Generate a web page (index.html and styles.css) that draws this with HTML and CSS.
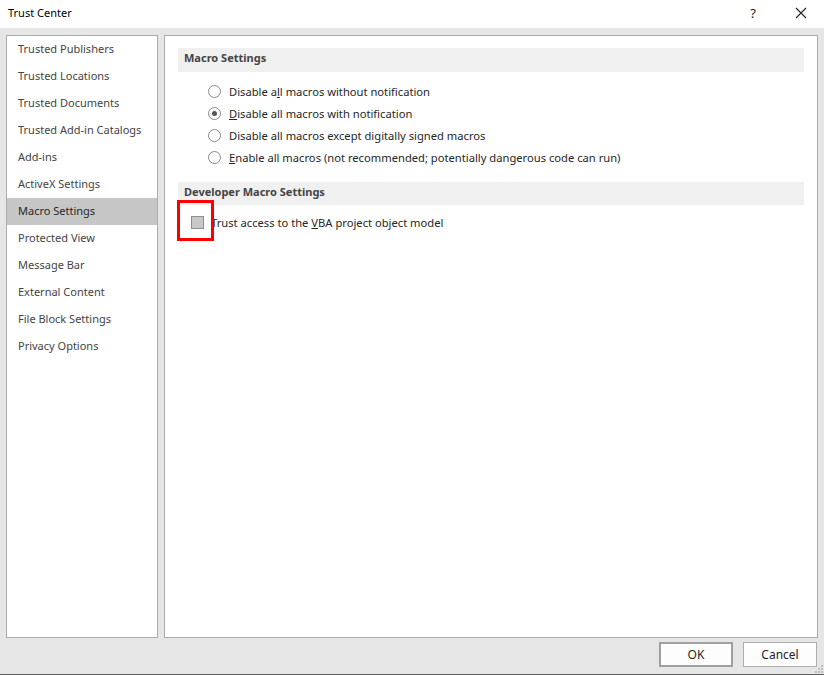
FILE: index.html
```html
<!DOCTYPE html>
<html lang="en">
<head>
    <meta charset="UTF-8">
    <meta name="viewport" content="width=device-width, initial-scale=1.0">
    <title>Trust Center</title>
    <link rel="stylesheet" href="styles.css">
</head>
<body>
    <div class="titlebar">
        <div class="title">Trust Center</div>
        <div class="help">?</div>
        <div class="close">
            <svg width="12" height="12" viewBox="0 0 12 12">
                <path d="M1 1 L11 11 M11 1 L1 11" stroke="#222" stroke-width="1.1" fill="none"/>
            </svg>
        </div>
    </div>

    <div class="main">
        <ul class="nav">
            <li>Trusted Publishers</li>
            <li>Trusted Locations</li>
            <li>Trusted Documents</li>
            <li>Trusted Add-in Catalogs</li>
            <li>Add-ins</li>
            <li>ActiveX Settings</li>
            <li class="selected">Macro Settings</li>
            <li>Protected View</li>
            <li>Message Bar</li>
            <li>External Content</li>
            <li>File Block Settings</li>
            <li>Privacy Options</li>
        </ul>

        <div class="content">
            <div class="section-head">Macro Settings</div>
            <div class="radios">
                <div class="radio-row"><span class="radio"></span>Disable a<u>l</u>l macros without notification</div>
                <div class="radio-row"><span class="radio checked"></span><u>D</u>isable all macros with notification</div>
                <div class="radio-row"><span class="radio"></span>Disable all macros except di<u>g</u>itally signed macros</div>
                <div class="radio-row"><span class="radio"></span><u>E</u>nable all macros (not recommended; potentially dangerous code can run)</div>
            </div>

            <div class="section-head dev">Developer Macro Settings</div>
            <div class="check-row">
                <span class="checkbox"></span>
                <span class="check-label">Trust access to the <u>V</u>BA project object model</span>
                <span class="highlight"></span>
            </div>
        </div>
    </div>

    <div class="footer">
        <button class="btn default">OK</button>
        <button class="btn">Cancel</button>
        <svg class="grip" width="8" height="8" viewBox="0 0 8 8">
            <rect x="6" y="0" width="2" height="2" fill="#bcbcbc"/>
            <rect x="3" y="3" width="2" height="2" fill="#bcbcbc"/>
            <rect x="6" y="3" width="2" height="2" fill="#bcbcbc"/>
            <rect x="0" y="6" width="2" height="2" fill="#bcbcbc"/>
            <rect x="3" y="6" width="2" height="2" fill="#bcbcbc"/>
            <rect x="6" y="6" width="2" height="2" fill="#bcbcbc"/>
        </svg>
    </div>
</body>
</html>
```

FILE: styles.css
```css
body {
    margin: 0;
    width: 824px;
    height: 675px;
    display: flex;
    flex-direction: column;
    background-color: #e6e6e6;
    font-family: 'Noto Sans', 'Open Sans', Arial, sans-serif;
    font-size: 11px;
    color: #262626;
    overflow: hidden;
    box-sizing: border-box;
    border-bottom: 1px solid #5f5f5f;
}
.titlebar {
    height: 28px;
    box-sizing: border-box;
    padding-bottom: 3px;
    background-color: #ffffff;
    display: flex;
    align-items: center;
    flex-shrink: 0;
}
.title {
    flex: 1;
    padding-left: 8px;
    color: #000;
}
.help {
    width: 14px;
    text-align: center;
    margin-right: 35px;
    font-size: 13px;
    color: #222;
}
.close {
    width: 12px;
    height: 12px;
    margin-right: 17px;
    display: flex;
}
.main {
    display: flex;
    gap: 6px;
    padding: 7px 6px 0 6px;
    height: 610px;
    box-sizing: border-box;
    flex-shrink: 0;
}
.nav {
    list-style: none;
    margin: 0;
    padding: 0;
    width: 152px;
    box-sizing: border-box;
    background-color: #fff;
    border: 1px solid #ababab;
}
.nav li {
    height: 27px;
    line-height: 26px;
    padding-left: 11px;
    color: #444;
    white-space: nowrap;
}
.nav li.selected {
    background-color: #c6c6c6;
    color: #262626;
}
.content {
    flex: 1;
    background-color: #fff;
    border: 1px solid #ababab;
    padding: 12px 13px 0 13px;
    font-size: 11.2px;
}
.section-head {
    height: 24px;
    line-height: 20px;
    background-color: #f0f0f0;
    padding-left: 6px;
    font-weight: bold;
    font-size: 11px;
    color: #444;
}
.section-head.dev {
    margin-top: 13px;
    height: 23px;
}
.radios {
    margin-top: 9px;
    padding-left: 30px;
}
.radio-row {
    height: 22px;
    line-height: 21px;
    display: flex;
    align-items: flex-start;
    white-space: nowrap;
}
.radio {
    width: 11px;
    height: 11px;
    margin-top: 4px;
    border: 1px solid #8a8a8a;
    border-radius: 50%;
    margin-right: 8px;
    box-sizing: content-box;
    position: relative;
}
.radio.checked::after {
    content: "";
    position: absolute;
    left: 3px;
    top: 3px;
    width: 5px;
    height: 5px;
    border-radius: 50%;
    background-color: #555;
}
.check-row {
    margin-top: 6px;
    height: 23px;
    padding-left: 13px;
    display: flex;
    align-items: center;
    position: relative;
}
.checkbox {
    width: 11px;
    height: 11px;
    border: 1px solid #8f8f8f;
    background-color: #c8c8c8;
    margin-right: 7px;
}
.highlight {
    position: absolute;
    left: -1px;
    top: -11px;
    width: 31px;
    height: 35px;
    border: 3px solid #ff0000;
}
.footer {
    flex: 1;
    display: flex;
    justify-content: flex-end;
    align-items: flex-start;
    gap: 10px;
    padding: 4px 7px 0 0;
    position: relative;
}
.btn {
    width: 74px;
    height: 25px;
    box-sizing: border-box;
    background-color: #fdfdfd;
    border: 1px solid #adadad;
    font-family: inherit;
    font-size: 12px;
    color: #262626;
    padding: 0;
}
.btn.default {
    border: 2px solid #a0a0a0;
}
.grip {
    position: absolute;
    right: 1px;
    bottom: 1px;
}
```
